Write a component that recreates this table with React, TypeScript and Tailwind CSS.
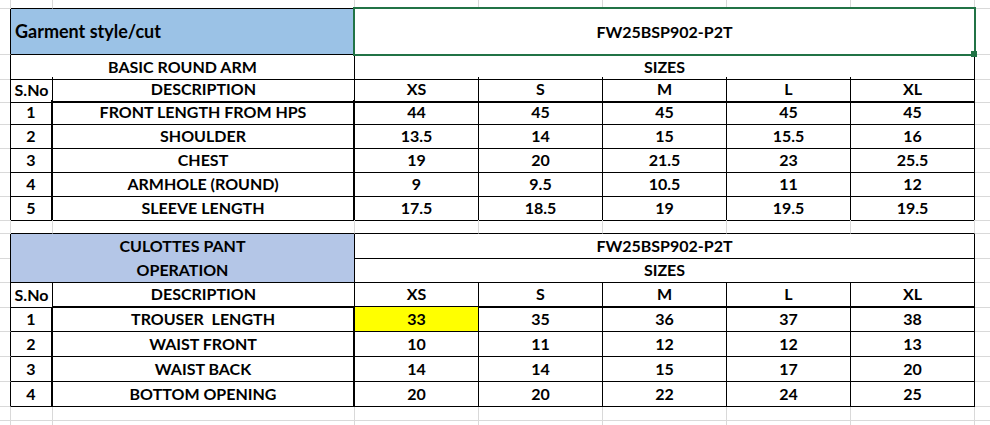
import clsx from "clsx";

const GRID = "grid grid-cols-[11px_42px_302px_124px_124px_124px_124px_124px_1fr]";

const top = [
  ["1", "FRONT LENGTH FROM HPS", "44", "45", "45", "45", "45"],
  ["2", "SHOULDER", "13.5", "14", "15", "15.5", "16"],
  ["3", "CHEST", "19", "20", "21.5", "23", "25.5"],
  ["4", "ARMHOLE (ROUND)", "9", "9.5", "10.5", "11", "12"],
  ["5", "SLEEVE LENGTH", "17.5", "18.5", "19", "19.5", "19.5"],
];

const pant = [
  ["1", "TROUSER  LENGTH", "33", "35", "36", "37", "38"],
  ["2", "WAIST FRONT", "10", "11", "12", "12", "13"],
  ["3", "WAIST BACK", "14", "14", "15", "17", "20"],
  ["4", "BOTTOM OPENING", "20", "20", "22", "24", "25"],
];

const sizes = ["XS", "S", "M", "L", "XL"];

function Row({ h, edge, children }: { h: string; edge?: boolean; children: React.ReactNode }) {
  return (
    <div className={clsx(GRID, h)}>
      <div className={clsx("border-r border-b border-b-[#d9d9d9]", edge ? "border-r-black" : "border-r-[#d9d9d9]")} />
      {children}
      <div className="border-b border-[#d9d9d9]" />
    </div>
  );
}

function Cell({ className, children }: { className?: string; children?: React.ReactNode }) {
  return (
    <div className={clsx("flex items-center justify-center whitespace-pre border-black", className)}>
      {children}
    </div>
  );
}

function Blank({ bottom }: { bottom?: boolean }) {
  return (
    <>
      {[0, 1, 2, 3, 4, 5, 6].map((i) => (
        <div
          key={i}
          className={clsx("border-r border-b border-r-[#d9d9d9]", bottom ? "border-b-black" : "border-b-[#d9d9d9]")}
        />
      ))}
    </>
  );
}

function HeadRow({ h }: { h: string }) {
  return (
    <Row h={h} edge>
      <Cell className="border-r border-b">S.No</Cell>
      <Cell className="border-r border-b-2">DESCRIPTION</Cell>
      {sizes.map((s) => (
        <Cell key={s} className="border-r border-b-2">{s}</Cell>
      ))}
    </Row>
  );
}

function DataRow({ h, r, mark }: { h: string; r: string[]; mark?: boolean }) {
  return (
    <Row h={h} edge>
      <Cell className="border-r-2 border-b">{r[0]}</Cell>
      <Cell className="border-r-2 border-b">{r[1]}</Cell>
      {r.slice(2).map((v, i) => (
        <Cell key={i} className={clsx("border-r border-b", mark && i === 0 && "bg-[#ffff00]")}>{v}</Cell>
      ))}
    </Row>
  );
}

export default function App() {
  return (
    <div className="relative w-[990px] h-[425px] overflow-hidden bg-white text-black font-bold text-[16px] font-['Lato',sans-serif]">
      <Row h="h-[9px]">
        <Blank bottom />
      </Row>
      <Row h="h-[46px]" edge>
        <Cell className="col-span-2 justify-start pl-1 text-[18px] border-r border-b bg-[#9bc2e6]">Garment style/cut</Cell>
        <Cell className="col-span-5 border-r border-b">FW25BSP902-P2T</Cell>
      </Row>
      <Row h="h-[22px]" edge>
        <Cell className="col-span-2 border-r border-b">BASIC ROUND ARM</Cell>
        <Cell className="col-span-5 border-r border-b">SIZES</Cell>
      </Row>
      <HeadRow h="h-[23px]" />
      {top.map((r) => (
        <DataRow key={r[0]} h="h-[24px]" r={r} />
      ))}

      <Row h="h-[14px]">
        <Blank bottom />
      </Row>
      <Row h="h-[24px]" edge>
        <Cell className="col-span-2 border-r border-b bg-[#b4c6e7]">CULOTTES PANT</Cell>
        <Cell className="col-span-5 border-r border-b">FW25BSP902-P2T</Cell>
      </Row>
      <Row h="h-[24px]" edge>
        <Cell className="col-span-2 border-r border-b bg-[#b4c6e7]">OPERATION</Cell>
        <Cell className="col-span-5 border-r border-b">SIZES</Cell>
      </Row>
      <HeadRow h="h-[25px]" />
      {pant.map((r, i) => (
        <DataRow key={r[0]} h="h-[25px]" r={r} mark={i === 0} />
      ))}
      <Row h="h-[14px]">
        <Blank />
      </Row>
      <Row h="h-[14px]">
        <Blank />
      </Row>

      {/* excel selection box */}
      <div className="absolute left-[353px] top-[7px] w-[623px] h-[49px] border-2 border-[#217346]" />
      <div className="absolute left-[971px] top-[51px] w-[6px] h-[6px] bg-[#217346]" />
    </div>
  );
}
